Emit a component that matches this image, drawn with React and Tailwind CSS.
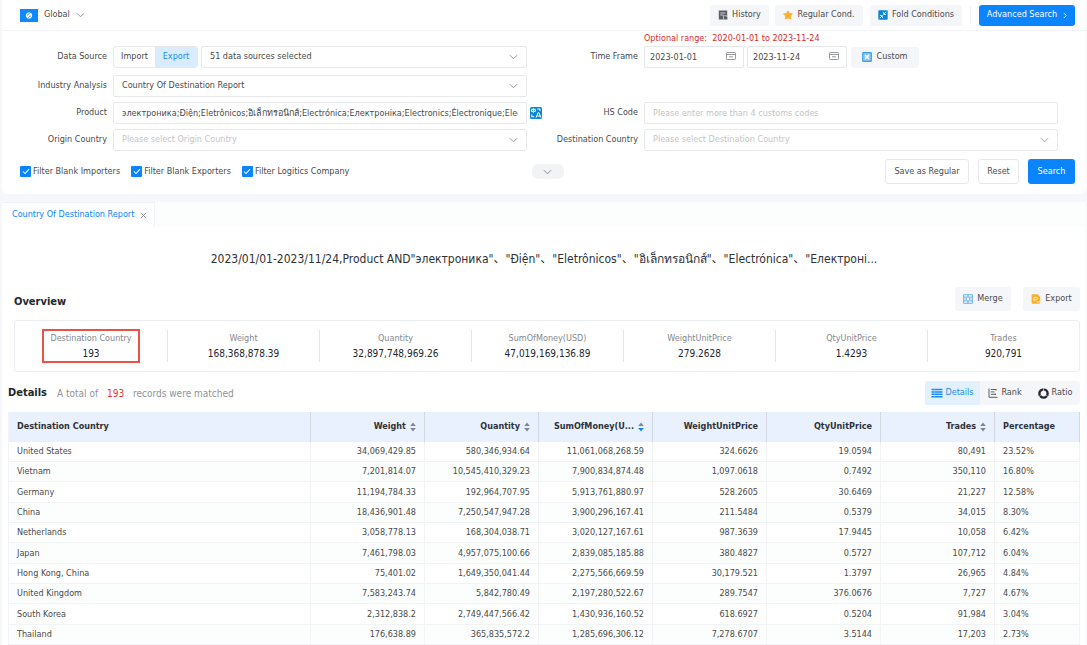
import React from 'react';

const fieldClass =
  'h-[22px] w-full min-w-0 appearance-none rounded-[2px] border border-[#e6e8eb] bg-white text-[#4a4a4a] outline-none placeholder:text-[#c3c5c8]';

function Chevron({ className = '' }) {
  return (
    <svg viewBox="0 0 10 6" className={`h-[6px] w-[9px] fill-none stroke-current ${className}`} aria-hidden="true">
      <path d="M1 1 L5 5 L9 1" strokeWidth="1" />
    </svg>
  );
}

function SelectField({ id, value, placeholder, label, className = '' }) {
  return (
    <div className={`relative min-w-0 flex-1 ${className}`}>
      <select id={id} aria-label={label} className={`${fieldClass} px-2 ${placeholder ? 'text-[#c3c5c8]' : 'text-[#4a4a4a]'}`}>
        <option>{value || placeholder}</option>
      </select>
      <Chevron className="pointer-events-none absolute top-2 right-[9px] text-[#8a8d91]" />
    </div>
  );
}

function Row({ label, htmlFor, children, trailing, className = '' }) {
  return (
    <div className={`flex h-[22px] items-center ${className}`}>
      <label htmlFor={htmlFor} className="mr-1.5 flex w-[85px] shrink-0 justify-end whitespace-nowrap">
        {label}
      </label>
      <div className="flex min-w-0 flex-1 items-center">{children}</div>
      <div className="w-[26px] shrink-0 pl-[3px]">{trailing}</div>
    </div>
  );
}

function DateField({ id, value, label }) {
  return (
    <div className="relative w-[100px]">
      <input id={id} aria-label={label} defaultValue={value} className={`${fieldClass} px-[5px]`} />
      <svg viewBox="0 0 10 8" className="pointer-events-none absolute top-[6px] right-[8px] h-[8px] w-[10px] fill-none stroke-[#7d8085]" aria-hidden="true">
        <rect x="0.5" y="0.5" width="9" height="7" rx="0.8" strokeWidth="0.8" />
        <path d="M0.5 2.5h9M3 4.8h4" strokeWidth="0.8" />
      </svg>
    </div>
  );
}

function SoftButton({ icon, children, className = '' }) {
  return (
    <button type="button" className={`flex items-center justify-center gap-1 rounded-[3px] bg-[#f5f6fa] whitespace-nowrap ${className}`}>
      {icon}
      {children}
    </button>
  );
}

const HistoryIcon = () => (
  <svg viewBox="0 0 10 10" className="size-[10px]" aria-hidden="true">
    <path d="M0.8 0.5h8.4v5.2L6 9.5H0.8z" fill="#5b5e66" />
    <path d="M2.4 3h5M2.4 5h3" stroke="#fff" strokeWidth="0.7" />
    <path d="M5.4 9.5V5.8h4" stroke="#f5f6fa" strokeWidth="0.6" fill="none" />
    <path d="M6.2 6.6h3.2v2.9H6.2z" fill="#5b5e66" />
  </svg>
);

const StarIcon = () => (
  <svg viewBox="0 0 10 10" className="size-[10px]" aria-hidden="true">
    <path d="M5 0.9 6.4 3.4 9.4 3.9 7.3 6.1 7.8 9.1 5 7.8 2.2 9.1 2.7 6.1 0.6 3.9 3.6 3.4z" fill="#fbb02d" stroke="#fbb02d" strokeWidth="0.9" strokeLinejoin="round" />
  </svg>
);

const FoldIcon = () => (
  <svg viewBox="0 0 10 10" className="size-[10px]" aria-hidden="true">
    <rect x="0.3" y="0.3" width="9.4" height="9.4" rx="1" fill="#0e86d4" />
    <path d="M5.6 2v2.4H8M8.2 1.8 5.8 4.2M2 5.6h2.4V8M1.8 8.2 4.2 5.8" stroke="#fff" strokeWidth="0.8" fill="none" />
  </svg>
);

const CustomIcon = () => (
  <svg viewBox="0 0 10 10" className="size-[10px]" aria-hidden="true">
    <rect x="0.7" y="0.7" width="8.6" height="8.6" rx="0.6" fill="#8cc9f2" stroke="#3aa0e6" strokeWidth="1.2" />
    <path d="M3 3l4 4M7 3 3 7" stroke="#fff" strokeWidth="1.4" />
    <rect x="3.8" y="3.8" width="2.4" height="2.4" fill="#e9f6ff" />
  </svg>
);

const MergeIcon = () => (
  <svg viewBox="0 0 10 10" className="size-[10px] fill-none stroke-[#45a6ea]" aria-hidden="true">
    <path d="M0.6 0.7h8.8v8.6H0.6zM5 0.7v2.4M5 6.9v2.4M0.6 3.1h8.8M0.6 6.9h8.8" strokeWidth="0.8" />
    <path d="M1.6 5h2.2M3 4.2 3.8 5 3 5.8M8.4 5H6.2M7 4.2 6.2 5 7 5.8" strokeWidth="0.7" />
  </svg>
);

const ExportIcon = () => (
  <svg viewBox="0 0 10 10" className="size-[10px]" aria-hidden="true">
    <path d="M1.6 0.2h4.8L9.2 3v5.8a1 1 0 0 1-1 1H1.6a1 1 0 0 1-1-1V1.2a1 1 0 0 1 1-1z" fill="#fbb02d" />
    <path d="M3 7.4V3.4h2.4a1.1 1.1 0 0 1 0 2.3H3.4M6 8h3.4" stroke="#fff" strokeWidth="0.8" fill="none" />
  </svg>
);

const TranslateIcon = () => (
  <svg viewBox="0 0 12 12" className="size-3" aria-hidden="true">
    <rect width="12" height="12" rx="1.5" fill="#0e86d4" />
    <path d="M1.4 2.4h4v2h-4zM3.4 1.2v4.6M7.4 2h2.6v2M1.8 7.4v2.4h2.4M6 10.6 8.2 5.6h.6l2.2 5M7 9h3.2" stroke="#fff" strokeWidth="1" fill="none" />
  </svg>
);

const DetailsIcon = () => (
  <svg viewBox="0 0 12 10" className="h-[10px] w-3 stroke-[#1a8cf5]" aria-hidden="true">
    <path d="M0.5 1.5h11M0.5 4h11M0.5 6.3h11M0.5 8.8h11" strokeWidth="1.5" />
    <path d="M3.5 0.5v9" stroke="#8cc6fa" strokeWidth="0.5" />
  </svg>
);

const RankIcon = () => (
  <svg viewBox="0 0 10 10" className="size-[10px] fill-none stroke-[#5b5e66]" aria-hidden="true">
    <path d="M1 0.5v8.8h8.5M2.8 1.5h5.6M2.8 3.9h3.6M2.8 6.3h4.8M8 1.2v1.4M7.4 5.6v1.4" strokeWidth="1" />
  </svg>
);

const RatioIcon = () => (
  <svg viewBox="0 0 12 12" className="size-[11px] fill-none stroke-[#23262d]" aria-hidden="true">
    <circle cx="6" cy="6" r="4.5" strokeWidth="2.6" />
    <path d="M6 0v3.2M9 8l2.4 1.8M3 8 .6 9.8" stroke="#f5f6fa" strokeWidth="0.7" />
  </svg>
);

function Sorter({ active }) {
  return (
    <svg viewBox="0 0 6 10" className="ml-1 inline-block h-[10px] w-[6px] shrink-0" aria-hidden="true">
      <path d="M3 0.4 5.8 4H.2z" fill="#7f8592" />
      <path d="M3 9.6.2 6h5.6z" fill={active ? '#0a84ff' : '#7f8592'} />
    </svg>
  );
}

const filters = ['Filter Blank Importers', 'Filter Blank Exporters', 'Filter Logitics Company'];

const overview = [
  ['Destination Country', '193'],
  ['Weight', '168,368,878.39'],
  ['Quantity', '32,897,748,969.26'],
  ['SumOfMoney(USD)', '47,019,169,136.89'],
  ['WeightUnitPrice', '279.2628'],
  ['QtyUnitPrice', '1.4293'],
  ['Trades', '920,791'],
];

const columns = [
  { name: 'Weight', sort: true },
  { name: 'Quantity', sort: true },
  { name: 'SumOfMoney(U...', sort: true, active: true },
  { name: 'WeightUnitPrice' },
  { name: 'QtyUnitPrice' },
  { name: 'Trades', sort: true },
];

const rows = [
  ['United States', '34,069,429.85', '580,346,934.64', '11,061,068,268.59', '324.6626', '19.0594', '80,491', '23.52%'],
  ['Vietnam', '7,201,814.07', '10,545,410,329.23', '7,900,834,874.48', '1,097.0618', '0.7492', '350,110', '16.80%'],
  ['Germany', '11,194,784.33', '192,964,707.95', '5,913,761,880.97', '528.2605', '30.6469', '21,227', '12.58%'],
  ['China', '18,436,901.48', '7,250,547,947.28', '3,900,296,167.41', '211.5484', '0.5379', '34,015', '8.30%'],
  ['Netherlands', '3,058,778.13', '168,304,038.71', '3,020,127,167.61', '987.3639', '17.9445', '10,058', '6.42%'],
  ['Japan', '7,461,798.03', '4,957,075,100.66', '2,839,085,185.88', '380.4827', '0.5727', '107,712', '6.04%'],
  ['Hong Kong, China', '75,401.02', '1,649,350,041.44', '2,275,566,669.59', '30,179.521', '1.3797', '26,965', '4.84%'],
  ['United Kingdom', '7,583,243.74', '5,842,780.49', '2,197,280,522.67', '289.7547', '376.0676', '7,727', '4.67%'],
  ['South Korea', '2,312,838.2', '2,749,447,566.42', '1,430,936,160.52', '618.6927', '0.5204', '91,984', '3.04%'],
  ['Thailand', '176,638.89', '365,835,572.2', '1,285,696,306.12', '7,278.6707', '3.5144', '17,203', '2.73%'],
];

function SearchPanel() {
  return (
    <section className="rounded-b-md bg-white pb-2.5">
      <header className="flex h-[31px] items-center border-b border-[#f0f2f5] pr-[11px] pl-[18px]">
        <button type="button" className="flex items-center">
          <svg viewBox="0 0 18 13" className="h-[13px] w-[18px]" aria-hidden="true">
            <rect width="18" height="13" fill="#1089fb" />
            <circle cx="9" cy="6.5" r="3.1" fill="#fff" />
            <path d="M7 6.2c1-.2 1.2-1.6 2.4-1.6M8.6 8.6c0-1 1.6-1 2.4-2" stroke="#1089fb" strokeWidth="0.9" fill="none" />
          </svg>
          <span className="ml-1.5">Global</span>
          <Chevron className="ml-1.5 text-[#8a8d91]" />
        </button>
        <div className="ml-auto flex items-center">
          <SoftButton icon={<HistoryIcon />} className="h-[21px] w-[59px]">History</SoftButton>
          <SoftButton icon={<StarIcon />} className="ml-1.5 h-[21px] w-[88px]">Regular Cond.</SoftButton>
          <SoftButton icon={<FoldIcon />} className="ml-[7px] h-[21px] w-[92px]">Fold Conditions</SoftButton>
          <span className="mx-2 h-[18px] w-px bg-[#eceef1]" />
          <button type="button" className="flex h-[21px] w-24 items-center justify-center gap-1.5 rounded-[3px] bg-[#0a84ff] whitespace-nowrap text-white">
            Advanced Search
            <svg viewBox="0 0 4 8" className="h-[7px] w-1 fill-none stroke-white" aria-hidden="true">
              <path d="M0.5 1 3.4 4 0.5 7" strokeWidth="1" />
            </svg>
          </button>
        </div>
      </header>

      <div className="grid grid-cols-2 pt-[15px] pr-0.5 pl-5">
        <div className="flex flex-col gap-[5px]">
          <Row label="Data Source" htmlFor="sources" className="mb-0.5">
            <div className="flex h-[22px] w-[85px] shrink-0 overflow-hidden rounded-[3px] border border-[#e6e8eb]">
              <button type="button" aria-pressed="false" className="w-[41px]">Import</button>
              <button type="button" aria-pressed="true" className="flex-1 bg-[#d9ecfd] text-[#1a8cf5]">Export</button>
            </div>
            <SelectField id="sources" value="51 data sources selected" className="ml-[3px]" />
          </Row>
          <Row label="Industry Analysis" htmlFor="industry">
            <SelectField id="industry" value="Country Of Destination Report" />
          </Row>
          <Row
            label="Product"
            htmlFor="product"
            trailing={
              <button type="button" aria-label="Translate" className="block">
                <TranslateIcon />
              </button>
            }
          >
            <input
              id="product"
              className={`${fieldClass} px-2`}
              defaultValue="электроника;Điện;Eletrônicos;อิเล็กทรอนิกส์;Electrónica;Електроніка;Electronics;Électronique;Electronics"
            />
          </Row>
          <Row label="Origin Country" htmlFor="origin">
            <SelectField id="origin" placeholder="Please select Origin Country" />
          </Row>
        </div>

        <div className="flex flex-col justify-between">
          <div className="relative">
            <p className="absolute -top-[14px] left-[91px] leading-3 whitespace-pre text-[#dc2a2a]">Optional range:  2020-01-01 to 2023-11-24</p>
            <Row label="Time Frame" htmlFor="from">
              <DateField id="from" label="Start date" value="2023-01-01" />
              <span className="w-[3px]" />
              <DateField id="to" label="End date" value="2023-11-24" />
              <SoftButton icon={<CustomIcon />} className="ml-1 h-[21px] w-[68px]">Custom</SoftButton>
            </Row>
          </div>
          <div className="flex flex-col gap-[5px]">
            <Row label="HS Code" htmlFor="hs">
              <input id="hs" className={`${fieldClass} px-2`} placeholder="Please enter more than 4 customs codes" />
            </Row>
            <Row label="Destination Country" htmlFor="destination">
              <SelectField id="destination" placeholder="Please select Destination Country" />
            </Row>
          </div>
        </div>
      </div>

      <div className="mt-2 flex items-center pr-[11px] pl-[18px]">
        <div className="flex flex-1 items-center gap-[11px]">
          {filters.map((f) => (
            <label key={f} className="flex items-center gap-[2px] whitespace-nowrap">
              <span className="grid size-[11px] place-items-center">
                <input type="checkbox" defaultChecked className="col-start-1 row-start-1 size-[11px] appearance-none rounded-[1px] bg-[#0a84ff]" />
                <svg viewBox="0 0 9 8" className="pointer-events-none col-start-1 row-start-1 h-[7px] w-2 fill-none stroke-white" aria-hidden="true">
                  <path d="M1 4 3.4 6.4 8 1.4" strokeWidth="1.2" />
                </svg>
              </span>
              {f}
            </label>
          ))}
        </div>
        <button type="button" aria-label="Collapse filters" className="flex h-[15px] w-8 items-center justify-center rounded-md bg-[#f2f3f5]">
          <Chevron className="text-[#7d8085]" />
        </button>
        <div className="flex flex-1 justify-end gap-[9px]">
          <button type="button" className="h-[25px] w-[84px] rounded-[3px] border border-[#e6e8eb]">Save as Regular</button>
          <button type="button" className="h-[25px] w-[41px] rounded-[3px] border border-[#e6e8eb]">Reset</button>
          <button type="button" className="h-[25px] w-[47px] rounded-[3px] bg-[#0a84ff] text-white">Search</button>
        </div>
      </div>
    </section>
  );
}

function Overview() {
  return (
    <section className="pr-1.5 pl-3">
      <div className="flex h-6 items-center">
        <h2 className="mt-1.5 text-[11px] font-bold text-[#23262d]">Overview</h2>
        <div className="ml-auto flex gap-3">
          <SoftButton icon={<MergeIcon />} className="h-6 w-14">Merge</SoftButton>
          <SoftButton icon={<ExportIcon />} className="h-6 w-[57px]">Export</SoftButton>
        </div>
      </div>
      <dl className="mt-[9px] grid grid-cols-7 rounded-[3px] border border-[#ebedf0] py-[9px]">
        {overview.map(([name, value], i) => (
          <div key={name} className={`flex h-8 flex-col items-center justify-center ${i ? 'border-l border-[#e3e5e8]' : ''}`}>
            <div className={`flex flex-col items-center px-1.5 whitespace-nowrap ${i ? '' : 'border-2 border-[#ea5148]'}`}>
              <dt className="leading-[15px] text-[#85888d]">{name}</dt>
              <dd className="text-[10px] leading-[15px] font-medium text-[#23262d]">{value}</dd>
            </div>
          </div>
        ))}
      </dl>
    </section>
  );
}

function Details() {
  return (
    <section className="mt-[9px] px-1.5">
      <div className="flex h-6 items-center">
        <h2 className="text-[11px] font-bold text-[#23262d]">Details</h2>
        <p className="ml-2.5 text-[10px] text-[#8f9297]">
          A total of <span className="mx-1.5 text-[#e8322d]">193</span> records were matched
        </p>
        <div className="ml-auto flex overflow-hidden rounded-[3px] bg-[#f5f6fa]">
          <button type="button" aria-pressed="true" className="flex h-6 w-[55px] items-center justify-center gap-0.5 bg-[#e3f0fd] text-[#1a8cf5]">
            <DetailsIcon />
            Details
          </button>
          <button type="button" aria-pressed="false" className="flex h-6 w-[50px] items-center justify-center gap-[3px]">
            <RankIcon />
            Rank
          </button>
          <button type="button" aria-pressed="false" className="flex h-6 w-[50px] items-center justify-center gap-[3px]">
            <RatioIcon />
            Ratio
          </button>
        </div>
      </div>

      <table className="mt-[7px] w-full table-fixed border-separate border-spacing-0 border-l border-[#f1f3f5]">
        <colgroup>
          <col />
          {columns.map((c) => (
            <col key={c.name} className="w-[114px]" />
          ))}
          <col className="w-[85px]" />
        </colgroup>
        <thead>
          <tr className="h-[30px] bg-[#eaf1fe] text-[#2e3138]">
            <th className="border-r border-[#d3d8e0] px-2 text-left font-bold">Destination Country</th>
            {columns.map((c) => (
              <th key={c.name} className="border-r border-[#d3d8e0] px-2 text-right font-bold whitespace-nowrap">
                <span className="flex items-center justify-end">
                  {c.name}
                  {c.sort && <Sorter active={c.active} />}
                </span>
              </th>
            ))}
            <th className="border-r border-[#d3d8e0] px-2 text-left font-bold">Percentage</th>
          </tr>
        </thead>
        <tbody>
          {rows.map((r) => (
            <tr key={r[0]} className="h-5 nth-[3n]:h-[21px] even:bg-[#fcfdfd]">
              {r.map((cell, i) => (
                <td key={i} className={`border-r border-b border-[#f1f3f5] px-2 leading-[15px] ${i > 0 && i < 7 ? 'text-right' : 'text-left'}`}>
                  {cell}
                </td>
              ))}
            </tr>
          ))}
        </tbody>
      </table>
    </section>
  );
}

export default function App() {
  return (
    <div className="min-h-screen bg-[#f5f7fa] pr-px pl-0.5 font-['DejaVu_Sans_Condensed','Noto_Sans_CJK_SC',sans-serif] text-[9px] text-[#4a4a4a]">
      <SearchPanel />
      <main className="mt-2 bg-white">
        <div className="flex h-[25px] bg-[#fcfdfd]">
          <div className="flex items-center gap-1.5 border-t border-r border-[#f0f2f5] bg-white pr-[7px] pl-2.5">
            <a href="#report" className="whitespace-nowrap text-[#0a84ff]">Country Of Destination Report</a>
            <button type="button" aria-label="Close tab">
              <svg viewBox="0 0 8 8" className="block size-[7px] stroke-[#8a8d91]" aria-hidden="true">
                <path d="M1 1 7 7M7 1 1 7" strokeWidth="0.9" />
              </svg>
            </button>
          </div>
        </div>
        <h1 id="report" className="pt-[22px] pb-[18px] text-center text-[12px] leading-5 whitespace-nowrap text-[#2e3138]">
          2023/01/01-2023/11/24,Product AND"электроника"、"Điện"、"Eletrônicos"、"อิเล็กทรอนิกส์"、"Electrónica"、"Електроні...
        </h1>
        <Overview />
        <Details />
      </main>
    </div>
  );
}
